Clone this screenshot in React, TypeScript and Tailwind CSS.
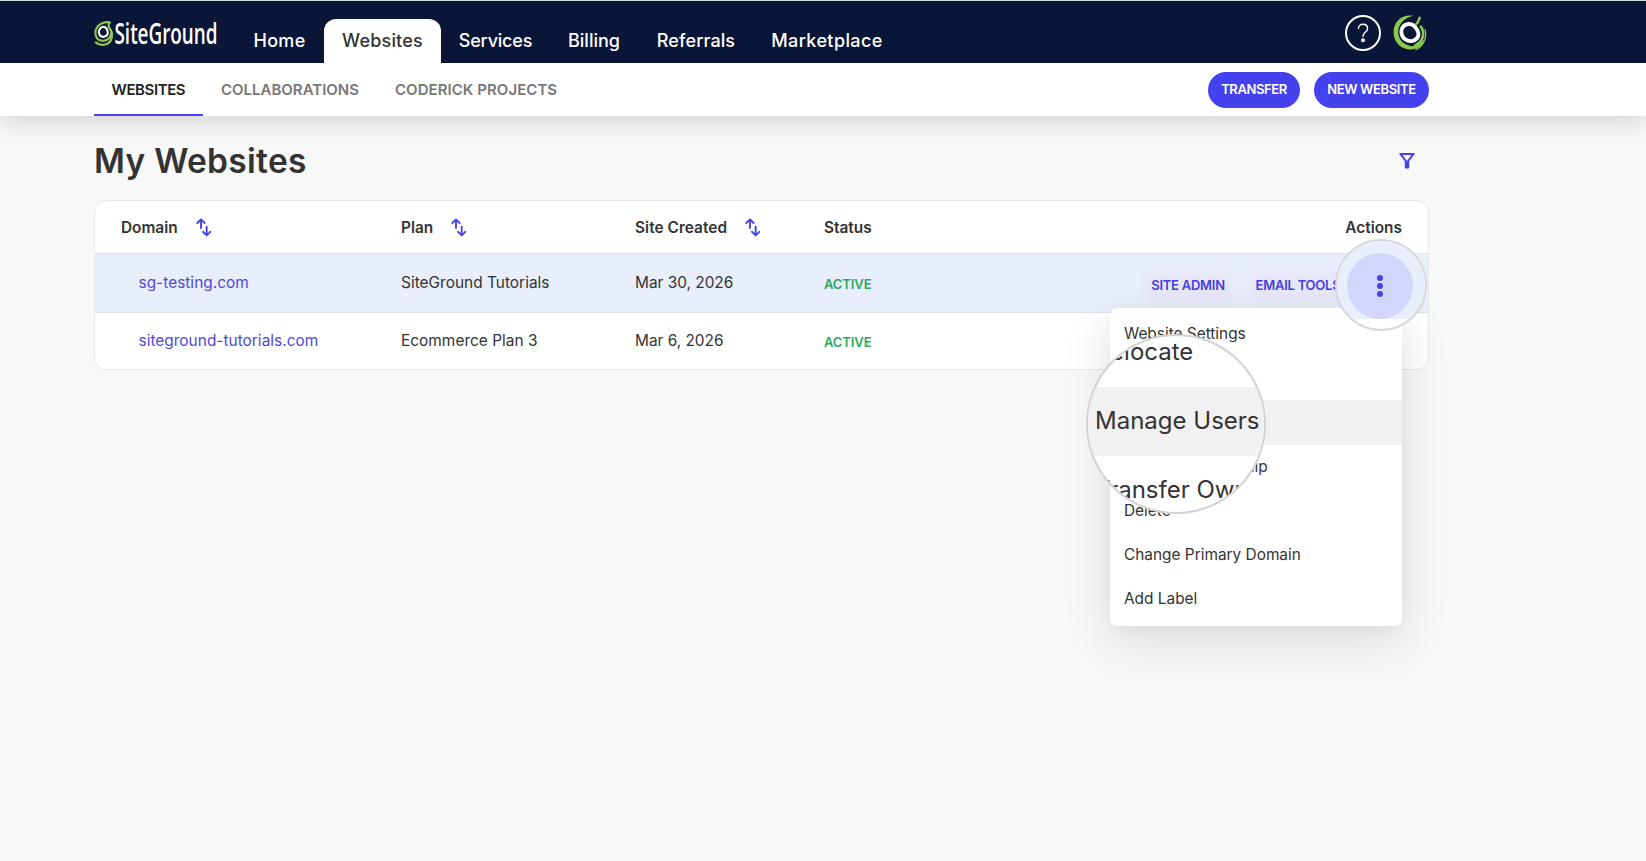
import React from "react";

function SortIcon({ className }: { className: string }) {
  return (
    <svg
      className={className}
      width="16"
      height="19"
      viewBox="0 0 16 19"
      fill="none"
      stroke="#4743e4"
      strokeWidth="1.9"
      strokeLinecap="round"
      strokeLinejoin="round"
    >
      <path d="M5 10V1.6M1.3 5L5 1.4L8.6 5" />
      <path d="M10.7 8.6V17M7 13.8L10.7 17.4L14.3 13.8" />
    </svg>
  );
}

function FilterIcon() {
  return (
    <svg width="16" height="17" viewBox="0 0 16 17" fill="none" stroke="#4540ec" strokeWidth="2" strokeLinejoin="round">
      <path d="M1.4 1.9H14.6L9.2 8.8V15.4H6.8V8.8Z" />
      <path d="M8 9.5V15" />
    </svg>
  );
}

function Logo() {
  return (
    <svg width="128" height="32" viewBox="0 0 128 32" className="overflow-visible">
      <g fill="none" strokeLinecap="round">
        <path d="M15.6 2.4C8.6 .8 1.8 6 1.4 12.4C1.1 17.4 4.2 20.6 8.6 20.8C13 21 16.8 18 17 13.6" stroke="#8cc84b" strokeWidth="2.2" />
        <path d="M15.6 2.4C13.6 4.6 14.6 7 16.2 9.2C19.4 14 18.4 22 12 24.2C8.4 25.4 4.4 24.8 1.8 22.4" stroke="#8cc84b" strokeWidth="2.2" />
        <path d="M9.4 6.8C6.2 7 4.6 10 5 13C5.4 16 8.2 17.4 10.8 16.6C13.6 15.8 14.4 13 13.4 10.4C12.6 8.2 11.2 6.8 9.4 6.8Z" stroke="#ffffff" strokeWidth="2.1" />
      </g>
      <text
        x="20.5"
        y="24"
        fill="#ffffff"
        fontSize="28"
        textLength="103"
        lengthAdjust="spacingAndGlyphs"
        className="font-['Open_Sans',sans-serif] font-semibold"
      >
        SiteGround
      </text>
    </svg>
  );
}

function Avatar() {
  return (
    <svg width="34" height="36" viewBox="0 0 34 36" fill="none" strokeLinecap="round">
      <path d="M20.5 .8C7 -1.4 0 8.4 .6 18.4C1.2 28 9 35 18.6 34.4C25 34 31 29.6 32.6 22C29 29 22 32.4 15.6 30.4C9.4 28.4 5.4 23.6 5.2 17.4C5 9.6 11 3 20.5 .8Z" fill="#8cc84b" />
      <path d="M23.6 8.6C25.2 7.6 25.6 6 26.6 2.8" stroke="#8cc84b" strokeWidth="2.6" />
      <path d="M27.8 11.6C32.4 18 30.4 26.6 22.4 30.2" stroke="#8cc84b" strokeWidth="2.6" />
      <path d="M32 14.6C34.4 23 30.4 31 22.8 34.6" stroke="#8cc84b" strokeWidth="1.3" />
      <path
        d="M15.4 9C10.2 9.4 7.6 13.8 8.6 18.8C9.6 24 14.8 27 19.6 25.8C25 24.4 26.6 20.2 24.6 15.8C22.6 11.4 19.6 8.7 15.4 9Z"
        fill="#0a1638"
        stroke="#ffffff"
        strokeWidth="3.8"
      />
    </svg>
  );
}

const rows = [
  { domain: "sg-testing.com", plan: "SiteGround Tutorials", created: "Mar 30, 2026", active: true },
  { domain: "siteground-tutorials.com", plan: "Ecommerce Plan 3", created: "Mar 6, 2026", active: false },
];

const menuItems = [
  "Website Settings",
  "Relocate",
  "Manage Users",
  "Transfer Ownership",
  "Delete",
  "Change Primary Domain",
  "Add Label",
];

function Header() {
  return (
    <header className="h-[63px] border-t border-[#cfdedb] bg-[#0a1638]">
      <div className="ml-[94px] flex h-[62px] w-[1335px] items-end">
        <div className="mb-[11px] w-[142px]">
          <Logo />
        </div>
        <nav className="flex h-11 text-center text-[18px] leading-[44px] font-medium text-white">
          <a className="w-[87px] tracking-[0.35px]">Home</a>
          <a className="ml-px w-[117px] rounded-t-[12px] bg-white tracking-[0.2px] text-[#333333]">Websites</a>
          <a className="w-[109px] tracking-[-0.2px]">Services</a>
          <a className="w-[88px]">Billing</a>
          <a className="w-[116px] tracking-[0.1px]">Referrals</a>
          <a className="w-[146px] tracking-[0.4px]">Marketplace</a>
        </nav>
        <div className="mr-[2px] mb-[12px] ml-auto flex items-center gap-[12px]">
          <span className="flex size-9 items-center justify-center rounded-full border-2 border-white">
            <svg width="12" height="20" viewBox="0 0 12 20" fill="none" stroke="#ffffff" strokeWidth="1.4" strokeLinecap="round">
              <path d="M1.4 5.6C1.4 3 3.4 1.2 6 1.2C8.8 1.2 10.6 3 10.6 5.4C10.6 7.4 9.4 8.4 8 9.5C6.6 10.6 6 11.4 6 13.4" />
              <circle cx="6" cy="17.2" r="1.3" fill="#ffffff" />
            </svg>
          </span>
          <Avatar />
        </div>
      </div>
    </header>
  );
}

function SubNav() {
  return (
    <div className="h-[53px] bg-white shadow-[0_8px_24px_rgba(0,0,0,0.13)]">
      <div className="ml-[94px] flex h-[53px] w-[1335px] items-center text-[15px] font-semibold">
        <a className="h-[53px] w-[109px] border-b-2 border-[#4743e4] pl-[17.5px] leading-[53px] tracking-[-0.4px] text-[#222222]">
          WEBSITES
        </a>
        <a className="w-[174px] pl-[18px] leading-[53px] text-[#777777]">COLLABORATIONS</a>
        <a className="pl-[18px] leading-[53px] tracking-[0.05px] text-[#777777]">CODERICK PROJECTS</a>
        <div className="ml-auto flex gap-[14px] text-center text-[13px] leading-[35px] text-white">
          <button className="h-9 w-[92px] rounded-full bg-[#4641ef] pb-px tracking-[-0.4px]">TRANSFER</button>
          <button className="h-9 w-[115px] rounded-full bg-[#4641ef] pb-px tracking-[-0.35px]">NEW WEBSITE</button>
        </div>
      </div>
    </div>
  );
}

function ActionsMenu() {
  return (
    <div className="absolute top-[308px] left-[1110px] h-[318px] w-[292px] rounded-[7px] bg-white pt-1 shadow-[0_14px_50px_rgba(0,0,0,0.12),0_4px_14px_rgba(0,0,0,0.03)]">
      {menuItems.map((item) => (
        <div
          key={item}
          className={
            item === "Manage Users"
              ? "h-[44.2px] bg-[#f1f1f1] px-3.5 leading-[44px]"
              : "h-[44.2px] px-3.5 leading-[44px]"
          }
        >
          {item}
        </div>
      ))}
    </div>
  );
}

function MenuLens() {
  return (
    <div className="absolute top-[334px] left-[1086px] size-[180px] overflow-hidden rounded-full border-2 border-[#d3d3d3] bg-white text-[24px] text-[#333333]">
      <div className="-mt-[18px] whitespace-nowrap">
        <div className="h-[69px] pl-[7px] leading-[67px]">Relocate</div>
        <div className="h-[69px] bg-[#f1f1f1] pl-[7px] leading-[67px]">Manage Users</div>
        <div className="h-[69px] pl-[7px] leading-[67px]">Transfer Ownership</div>
      </div>
    </div>
  );
}

function KebabLens() {
  return (
    <div className="absolute top-[239px] left-[1335px] size-[92px] overflow-hidden rounded-full border-2 border-[#d5d7da] bg-white">
      <div className="flex h-[78px] items-end justify-center bg-[#e8eefb] pr-[2px]">
        <div className="flex size-[66px] flex-col items-center justify-center gap-[2.4px] rounded-full bg-[#d1d6fa]">
          <i className="size-[6px] rounded-full bg-[#4743e4]" />
          <i className="size-[6px] rounded-full bg-[#4743e4]" />
          <i className="size-[6px] rounded-full bg-[#4743e4]" />
        </div>
      </div>
    </div>
  );
}

export default function App() {
  return (
    <div className="relative h-[861px] w-[1646px] overflow-hidden bg-[#f8f8f8] font-['Inter',sans-serif] text-[15.4px] text-[#333333]">
      <Header />
      <SubNav />
      <main className="ml-[94px] w-[1335px]">
        <div className="flex h-[84px] items-center justify-between pt-[5px] pr-[14px]">
          <h1 className="pt-px text-[33.5px] font-semibold tracking-[0.3px]">My Websites</h1>
          <FilterIcon />
        </div>
        <section className="overflow-hidden rounded-[12px] border border-[#e8e8e8] bg-white">
          <div className="grid h-[53px] grid-cols-[280px_234px_189px_1fr_auto] items-center border-b border-[#dfe2e6] pt-px pr-[26px] pl-[26px] font-semibold">
            <div className="flex items-center">
              Domain
              <SortIcon className="ml-[18px]" />
            </div>
            <div className="flex items-center">
              Plan
              <SortIcon className="ml-[18px]" />
            </div>
            <div className="flex items-center tracking-[0.05px]">
              Site Created
              <SortIcon className="ml-[18px]" />
            </div>
            <div>Status</div>
            <div>Actions</div>
          </div>
          {rows.map((row) => (
            <div
              key={row.domain}
              className={
                row.active
                  ? "grid h-[59px] grid-cols-[280px_234px_189px_1fr_auto] items-center border-b border-[#dfe2e6] bg-[#e8eefb] pl-[26px]"
                  : "grid h-[56px] grid-cols-[280px_234px_189px_1fr_auto] items-center pl-[26px]"
              }
            >
              <a className="pl-[17.5px] tracking-[0.03px] text-[#4f49d8]">{row.domain}</a>
              <div className="tracking-[0.03px]">{row.plan}</div>
              <div>{row.created}</div>
              <div className="pt-[3px] text-[13px] font-semibold tracking-[-0.1px] text-[#2fa85c]">ACTIVE</div>
              {row.active && (
                <div className="flex gap-[26px] pt-[4px] pr-[86px] text-[13px] font-semibold text-[#4540e0]">
                  <span className="w-[80px] rounded-full bg-[#e8e8fa] text-center leading-[24px] tracking-[-0.25px] shadow-[0_0_8px_5px_#e8e8fa]">
                    SITE ADMIN
                  </span>
                  <span className="w-[88px] rounded-full bg-[#e8e8fa] text-center leading-[24px] tracking-[-0.25px] shadow-[0_0_8px_5px_#e8e8fa]">
                    EMAIL TOOLS
                  </span>
                </div>
              )}
            </div>
          ))}
        </section>
      </main>
      <ActionsMenu />
      <MenuLens />
      <KebabLens />
    </div>
  );
}
